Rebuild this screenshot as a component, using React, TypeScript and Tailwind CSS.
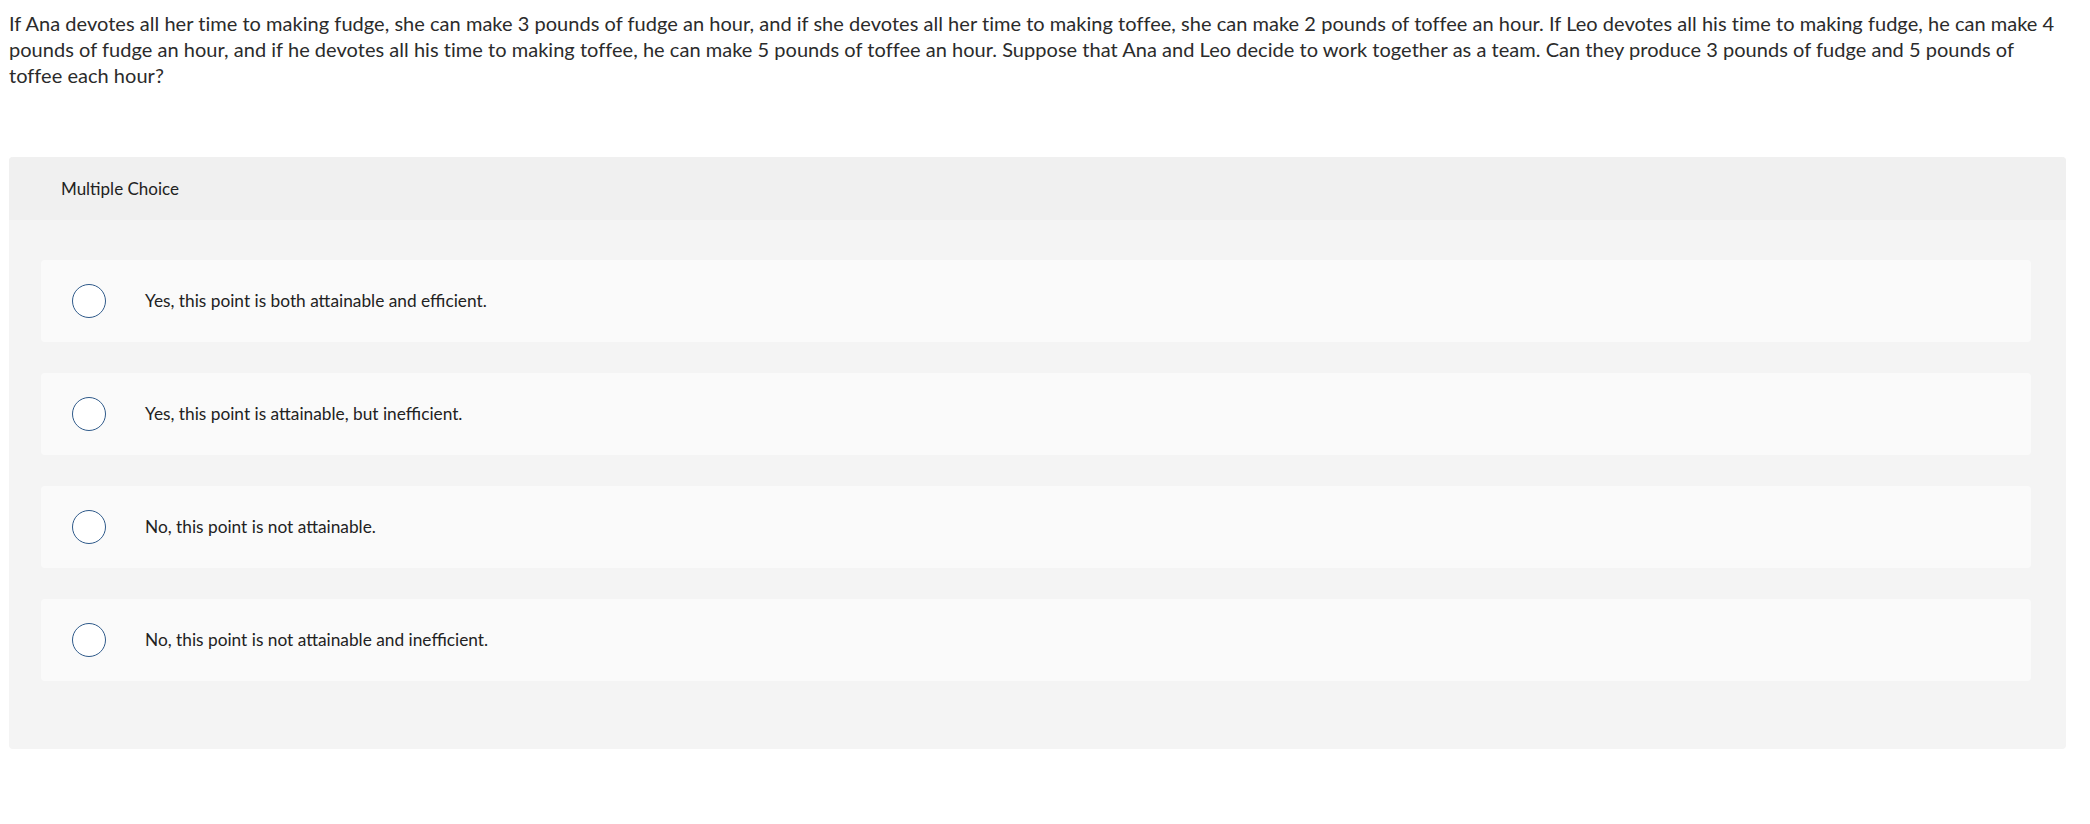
import React from "react";

const options = [
  "Yes, this point is both attainable and efficient.",
  "Yes, this point is attainable, but inefficient.",
  "No, this point is not attainable.",
  "No, this point is not attainable and inefficient.",
];

export default function App() {
  return (
    <div className="w-[2090px] h-[824px] bg-white text-[#2b2b2b]" style={{ fontFamily: "Lato, 'Open Sans', sans-serif" }}>
      <div className="pt-[10px] pl-[9px] pr-[20px] text-[20px] leading-[26px] tracking-[0.03px]">
        <div className="whitespace-nowrap">If Ana devotes all her time to making fudge, she can make 3 pounds of fudge an hour, and if she devotes all her time to making toffee, she can make 2 pounds of toffee an hour. If Leo devotes all his time to making fudge, he can make 4</div>
        <div className="whitespace-nowrap">pounds of fudge an hour, and if he devotes all his time to making toffee, he can make 5 pounds of toffee an hour. Suppose that Ana and Leo decide to work together as a team. Can they produce 3 pounds of fudge and 5 pounds of</div>
        <div className="whitespace-nowrap">toffee each hour?</div>
      </div>
      <div className="ml-[9px] mr-[24px] mt-[69px] rounded-[4px] bg-[#f4f4f4] overflow-hidden">
        <div className="h-[63px] bg-[#f0f0f0] flex items-center pl-[52px] text-[17px] text-[#222]">Multiple Choice</div>
        <div className="pl-[32px] pr-[35px] pt-[40px] pb-[68px] flex flex-col gap-[31px]">
          {options.map((o) => (
            <div key={o} className="h-[82px] rounded-[4px] bg-[#fafafa] flex items-center">
              <div className="ml-[31px] w-[34px] h-[34px] rounded-full border-[1.5px] border-[#2f5a8a] bg-white shrink-0" />
              <div className="ml-[39px] text-[17.3px] text-[#222]">{o}</div>
            </div>
          ))}
        </div>
      </div>
    </div>
  );
}
